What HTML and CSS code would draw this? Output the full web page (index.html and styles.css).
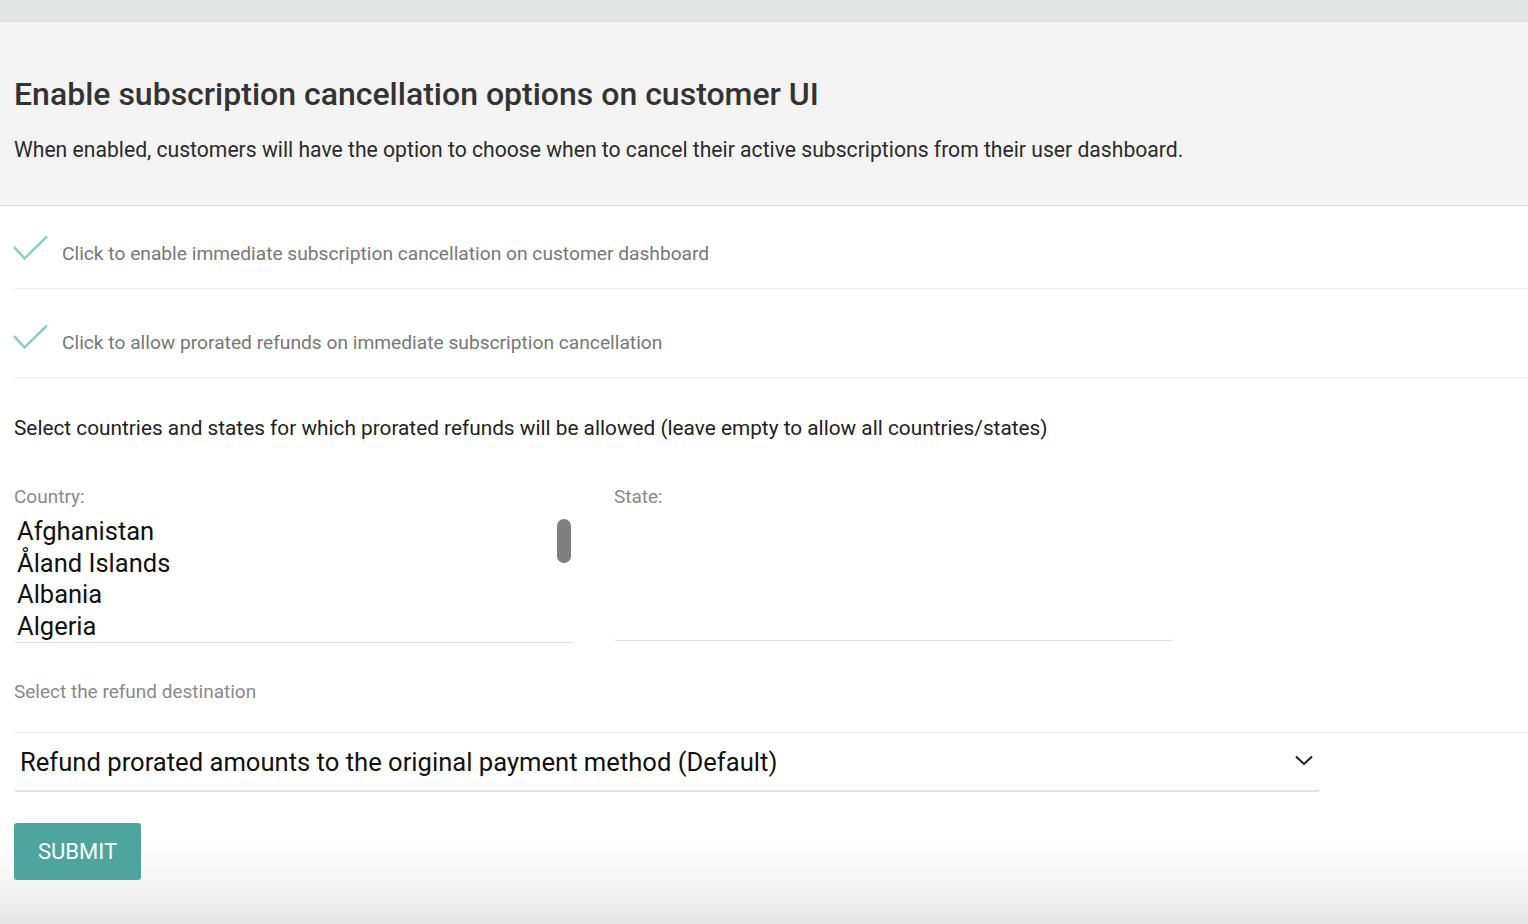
FILE: index.html
```html
<!DOCTYPE html>
<html lang="en">
<head>
<meta charset="utf-8">
<title>Subscription cancellation options</title>
<link rel="stylesheet" href="styles.css">
</head>
<body>
<div class="topbar"></div>
<section class="header">
  <h1 class="title">Enable subscription cancellation options on customer UI</h1>
  <p class="desc">When enabled, customers will have the option to choose when to cancel their active subscriptions from their user dashboard.</p>
</section>
<main class="content">
  <div class="opt-row opt-first">
    <svg class="check" width="36" height="26" viewBox="0 0 36 26"><path d="M1 12 L11.5 23.5 L34 1.5" fill="none" stroke="#8ed0c9" stroke-width="2.6"/></svg>
    <span class="opt-text">Click to enable immediate subscription cancellation on customer dashboard</span>
  </div>
  <div class="opt-row">
    <svg class="check" width="36" height="26" viewBox="0 0 36 26"><path d="M1 12 L11.5 23.5 L34 1.5" fill="none" stroke="#8ed0c9" stroke-width="2.6"/></svg>
    <span class="opt-text">Click to allow prorated refunds on immediate subscription cancellation</span>
  </div>
  <p class="section-text">Select countries and states for which prorated refunds will be allowed (leave empty to allow all countries/states)</p>
  <div class="geo">
    <div class="field">
      <div class="field-label">Country:</div>
      <div class="listbox">
        <div class="list-items">
          <div class="item">Afghanistan</div>
          <div class="item">Åland Islands</div>
          <div class="item">Albania</div>
          <div class="item">Algeria</div>
        </div>
        <div class="thumb"></div>
      </div>
    </div>
    <div class="field">
      <div class="field-label">State:</div>
      <div class="listbox listbox-empty"></div>
    </div>
  </div>
  <div class="field-label refund-label">Select the refund destination</div>
  <div class="select-wrap">
    <div class="select">
      <span class="select-text">Refund prorated amounts to the original payment method (Default)</span>
      <svg class="chevron" width="18" height="11" viewBox="0 0 18 11"><path d="M1 1.5 L9 9 L17 1.5" fill="none" stroke="#222" stroke-width="2"/></svg>
    </div>
  </div>
  <button class="submit">SUBMIT</button>
</main>
</body>
</html>
```
FILE: styles.css
```css
* { box-sizing: border-box; }
html, body { margin: 0; padding: 0; }
body {
  font-family: Roboto, "Noto Sans", "Liberation Sans", sans-serif;
  background: linear-gradient(to bottom, #ffffff 0, #ffffff 835px, #f6f6f6 880px, #e4e4e4 924px);
  color: #222;
  height: 924px;
  overflow: hidden;
}
.topbar {
  height: 22px;
  background: #e3e4e4;
  border-bottom: 1px solid #d9dada;
}
.header {
  background: #f4f4f4;
  height: 184px;
  padding: 0 14px;
  border-bottom: 1px solid #dcdcdc;
  overflow: hidden;
}
.title {
  margin: 0;
  padding-top: 54px;
  font-size: 32px;
  line-height: 36px;
  font-weight: 500;
  color: #333;
}
.desc {
  margin: 0;
  padding-top: 25px;
  font-size: 21.15px;
  line-height: 26px;
  color: #2b2b2b;
}
.content {
  padding-left: 14px;
}
.opt-row {
  display: flex;
  align-items: center;
  gap: 13px;
  height: 89px;
  padding-top: 18px;
  border-bottom: 1px solid #ececec;
}
.opt-first {
  height: 83px;
  padding-top: 12px;
}
.check {
  flex: none;
  margin-left: -1px;
  margin-top: -10px;
}
.opt-text {
  font-size: 19.2px;
  color: #777;
}
.section-text {
  margin: 0;
  padding-top: 38px;
  font-size: 20.8px;
  line-height: 24px;
  color: #222;
}
.geo {
  display: flex;
  gap: 40px;
  margin-top: 46px;
}
.field {
  width: 560px;
}
.field-label {
  font-size: 19px;
  line-height: 22px;
  color: #8a8a8a;
}
.listbox {
  position: relative;
  margin-top: 8px;
  height: 127px;
  border-bottom: 1px solid #dedede;
  border-radius: 0 0 3px 3px;
  overflow: hidden;
}
.listbox-empty {
  height: 125px;
}
.list-items {
  padding-left: 3px;
}
.item {
  font-size: 25.5px;
  line-height: 31.7px;
  color: #111;
}
.thumb {
  position: absolute;
  top: 3px;
  right: 3px;
  width: 14px;
  height: 44px;
  border-radius: 7px;
  background: #7f7f7f;
}
.refund-label {
  margin-top: 38px;
}
.select-wrap {
  margin-top: 29px;
  border-top: 1px solid #ececec;
}
.select {
  width: 1306px;
  height: 59px;
  display: flex;
  align-items: center;
  justify-content: space-between;
  padding: 0 7px 0 6px;
  border-bottom: 2px solid #e2e2e2;
  border-radius: 0 0 3px 3px;
}
.select-text {
  font-size: 25.6px;
  color: #111;
}
.chevron {
  margin-top: -2px;
}
.submit {
  display: block;
  margin-top: 31px;
  width: 127px;
  height: 57px;
  border: none;
  border-radius: 3px;
  background: #4ea59e;
  color: #fff;
  font-family: Roboto, "Noto Sans", sans-serif;
  font-size: 22px;
  padding: 0;
}
```
